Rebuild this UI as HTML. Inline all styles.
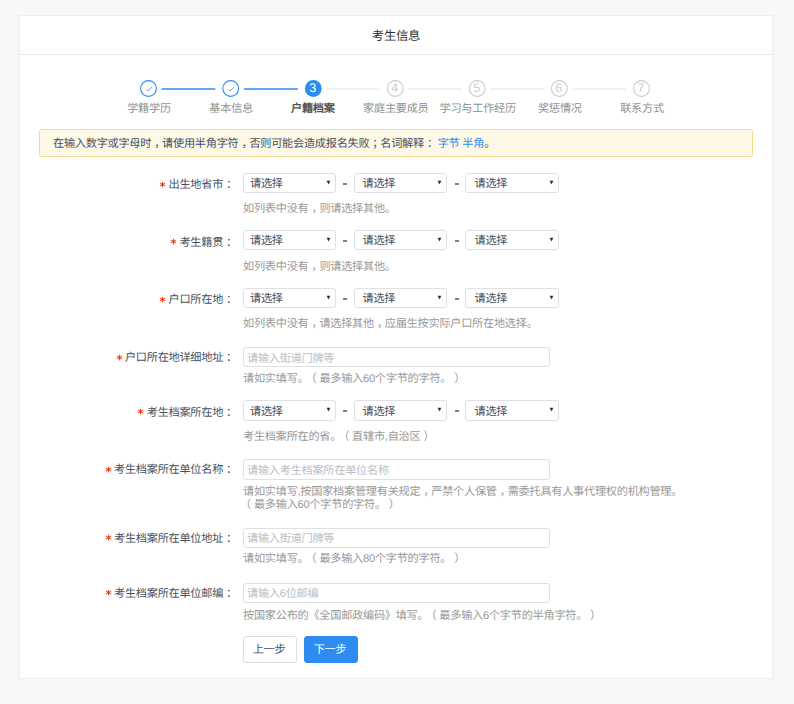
<!DOCTYPE html>
<html lang="zh-CN">
<head>
<meta charset="utf-8">
<title>考生信息</title>
<style>
*{box-sizing:border-box;margin:0;padding:0}
html,body{width:794px;height:704px;overflow:hidden}
body{background:#f8f8f9;font-family:"Liberation Sans",sans-serif;font-size:11.2px;letter-spacing:-0.28px;color:#495060;position:relative;text-spacing-trim:space-all;text-rendering:geometricPrecision}
.card{position:absolute;left:19px;top:15px;width:754px;height:664px;background:#fff;border:1px solid #eeeeef}
.hd{height:39px;border-bottom:1px solid #e9eaec;text-align:center;line-height:41px;font-size:12.4px;color:#2b2f38}
.steps{position:absolute;left:0;top:0;width:794px;height:0}
.step{position:absolute;top:80px;width:100px;margin-left:-50px;text-align:center}
.n{position:absolute;left:-1.2px;top:0;width:100px;height:17px;line-height:17px;font-size:12.5px;color:#ccc;text-align:center}
.step.cur .n{color:#fff}
.step .t{position:absolute;left:0;top:21px;width:100px;font-size:11.2px;letter-spacing:-0.28px;color:#909090;line-height:16px;white-space:nowrap}
.step.cur .t{color:#555;font-weight:bold;left:-1px}
.alert{position:absolute;left:39px;top:129px;width:714px;height:28px;background:#fef8e6;border:1px solid #fcd98f;border-radius:3px;line-height:26px;padding-top:1px;padding-left:13px;font-size:11.2px;letter-spacing:-0.28px;color:#495060}
.alert a{color:#2d8cf0;text-decoration:none}
.row{position:absolute;left:0;width:794px}
.lb{position:absolute;left:0;width:234px;text-align:right;line-height:20px;font-size:11.2px;letter-spacing:-0.28px;color:#495060;white-space:nowrap}
.lb i{display:inline-block;vertical-align:top;width:7px;height:7px;margin-right:2.4px;line-height:0;font-size:0}
.lb i svg{display:block}
.r{position:relative;left:3px}
.l{position:relative;left:-3px}
.sel{position:absolute;top:0;width:93px;height:20px;border:1px solid #dfe0e4;border-radius:3px;background:#fff;line-height:18px;padding-left:6px;font-size:11.2px;letter-spacing:-0.28px;color:#495060}
.sel:after{content:"";position:absolute;right:4px;top:6px;width:5px;height:5px;background:#2b303b;clip-path:polygon(0.6px 0.8px,4.4px 0.8px,2.5px 4.4px)}
.dash{position:absolute;top:10px;width:4px;height:2px;background:#7b818d;font-size:0;overflow:hidden}
.inp{position:absolute;left:243px;top:0;width:307px;height:20px;border:1px solid #dfe0e4;border-radius:3px;background:#fff;line-height:18px;padding-left:3px;font-size:11.2px;letter-spacing:-0.28px;color:#bbbec4}
.help{position:absolute;left:243px;font-size:11.2px;letter-spacing:-0.28px;color:#999;line-height:14px;white-space:nowrap}
.btn{position:absolute;top:636px;height:27px;width:54px;padding:1px 2px 0 0;border-radius:3px;font-size:11.2px;letter-spacing:-0.28px;text-align:center;line-height:25px;border:1px solid #dddee1;background:#fff;color:#495060}
.btn.p{background:#2d8cf0;border-color:#2d8cf0;color:#fff}
</style>
</head>
<body>
<div class="card"><div class="hd">考生信息</div></div>

<div class="steps">
<svg width="794" height="110" viewBox="0 0 794 110" style="position:absolute;left:0;top:0">
<line x1="161.7" y1="89" x2="215.3" y2="89" stroke="#2d8cf0" stroke-width="1.6"/>
<line x1="243.9" y1="89" x2="297.9" y2="89" stroke="#2d8cf0" stroke-width="1.6"/>
<line x1="326.5" y1="89" x2="379.9" y2="89" stroke="#ebecee" stroke-width="1.6"/>
<line x1="408.5" y1="89" x2="461.8" y2="89" stroke="#ebecee" stroke-width="1.6"/>
<line x1="490.4" y1="89" x2="544.0" y2="89" stroke="#ebecee" stroke-width="1.6"/>
<line x1="572.6" y1="89" x2="626.1" y2="89" stroke="#ebecee" stroke-width="1.6"/>
<circle cx="148.5" cy="88.5" r="7.9" fill="#fff" stroke="#2d8cf0" stroke-width="1.1"/><path d="M146.4 89.5 L147.8 91 L152.1 86.9" fill="none" stroke="#4a9af0" stroke-width="0.9"/>
<circle cx="230.7" cy="88.5" r="7.9" fill="#fff" stroke="#2d8cf0" stroke-width="1.1"/><path d="M228.6 89.5 L230.0 91 L234.3 86.9" fill="none" stroke="#4a9af0" stroke-width="0.9"/>
<circle cx="313.3" cy="88.5" r="8.4" fill="#2d8cf0"/>
<circle cx="395.3" cy="88.5" r="7.9" fill="#fff" stroke="#ccc" stroke-width="1.1"/>
<circle cx="477.2" cy="88.5" r="7.9" fill="#fff" stroke="#ccc" stroke-width="1.1"/>
<circle cx="559.4" cy="88.5" r="7.9" fill="#fff" stroke="#ccc" stroke-width="1.1"/>
<circle cx="641.5" cy="88.5" r="7.9" fill="#fff" stroke="#ccc" stroke-width="1.1"/>
</svg>
<div class="step done" style="left:149.0px"><div class="t">学籍学历</div></div>
<div class="step done" style="left:231.2px"><div class="t">基本信息</div></div>
<div class="step cur" style="left:313.8px"><div class="n">3</div><div class="t">户籍档案</div></div>
<div class="step" style="left:395.8px"><div class="n">4</div><div class="t">家庭主要成员</div></div>
<div class="step" style="left:477.7px"><div class="n">5</div><div class="t">学习与工作经历</div></div>
<div class="step" style="left:559.9px"><div class="n">6</div><div class="t">奖惩情况</div></div>
<div class="step" style="left:642.0px"><div class="n">7</div><div class="t">联系方式</div></div>
</div>

<div class="alert">在输入数字或字母时<span class="r">，</span>请使用半角字符<span class="r">，</span>否则可能会造成报名失败<span class="r">；</span>名词解释<span class="r">：</span> <a>字节</a> <a>半角</a>。</div>

<div class="row" style="top:173px">
  <div class="lb" style="padding-top:2px"><i style="margin-top:6px"><svg width="7" height="7" viewBox="0 0 7 7"><g stroke="#f4573a" stroke-width="1.05" stroke-linecap="round"><line x1="3.5" y1="0.9" x2="3.5" y2="6.1"/><line x1="1.3" y1="2.25" x2="5.7" y2="4.75"/><line x1="1.3" y1="4.75" x2="5.7" y2="2.25"/></g><circle cx="3.5" cy="3.5" r="0.95" fill="#e9200a"/></svg></i>出生地省市<span class="r">：</span></div>
  <div class="sel" style="padding-top:1px;left:243px">请选择</div><div class="dash" style="left:343px"></div>
  <div class="sel" style="padding-top:1px;left:354px;padding-left:7.5px">请选择</div><div class="dash" style="left:455px"></div>
  <div class="sel" style="padding-top:1px;left:465px;width:94px;padding-left:8.5px">请选择</div>
  <div class="help" style="top:29px">如列表中没有<span class="r">，</span>则请选择其他。</div>
</div>

<div class="row" style="top:230px">
  <div class="lb" style="padding-top:3px"><i style="margin-top:5px"><svg width="7" height="7" viewBox="0 0 7 7"><g stroke="#f4573a" stroke-width="1.05" stroke-linecap="round"><line x1="3.5" y1="0.9" x2="3.5" y2="6.1"/><line x1="1.3" y1="2.25" x2="5.7" y2="4.75"/><line x1="1.3" y1="4.75" x2="5.7" y2="2.25"/></g><circle cx="3.5" cy="3.5" r="0.95" fill="#e9200a"/></svg></i>考生籍贯<span class="r">：</span></div>
  <div class="sel" style="padding-top:1px;left:243px">请选择</div><div class="dash" style="left:343px"></div>
  <div class="sel" style="padding-top:1px;left:354px;padding-left:7.5px">请选择</div><div class="dash" style="left:455px"></div>
  <div class="sel" style="padding-top:1px;left:465px;width:94px;padding-left:8.5px">请选择</div>
  <div class="help" style="top:30px">如列表中没有<span class="r">，</span>则请选择其他。</div>
</div>

<div class="row" style="top:288px">
  <div class="lb" style="padding-top:2px"><i style="margin-top:6px"><svg width="7" height="7" viewBox="0 0 7 7"><g stroke="#f4573a" stroke-width="1.05" stroke-linecap="round"><line x1="3.5" y1="0.9" x2="3.5" y2="6.1"/><line x1="1.3" y1="2.25" x2="5.7" y2="4.75"/><line x1="1.3" y1="4.75" x2="5.7" y2="2.25"/></g><circle cx="3.5" cy="3.5" r="0.95" fill="#e9200a"/></svg></i>户口所在地<span class="r">：</span></div>
  <div class="sel" style="padding-top:1px;left:243px">请选择</div><div class="dash" style="left:343px"></div>
  <div class="sel" style="padding-top:1px;left:354px;padding-left:7.5px">请选择</div><div class="dash" style="left:455px"></div>
  <div class="sel" style="padding-top:1px;left:465px;width:94px;padding-left:8.5px">请选择</div>
  <div class="help" style="top:29px">如列表中没有<span class="r">，</span>请选择其他<span class="r">，</span>应届生按实际户口所在地选择。</div>
</div>

<div class="row" style="top:347px">
  <div class="lb" style="padding-top:1px"><i style="margin-top:6px"><svg width="7" height="7" viewBox="0 0 7 7"><g stroke="#f4573a" stroke-width="1.05" stroke-linecap="round"><line x1="3.5" y1="0.9" x2="3.5" y2="6.1"/><line x1="1.3" y1="2.25" x2="5.7" y2="4.75"/><line x1="1.3" y1="4.75" x2="5.7" y2="2.25"/></g><circle cx="3.5" cy="3.5" r="0.95" fill="#e9200a"/></svg></i>户口所在地详细地址<span class="r">：</span></div>
  <div class="inp" style="padding-top:2px;">请输入街道门牌等</div>
  <div class="help" style="top:25px">请如实填写。<span class="l">（</span>最多输入60个字节的字符。<span class="r">）</span></div>
</div>

<div class="row" style="top:400px">
  <div class="lb" style="padding-top:3px"><i style="margin-top:5px"><svg width="7" height="7" viewBox="0 0 7 7"><g stroke="#f4573a" stroke-width="1.05" stroke-linecap="round"><line x1="3.5" y1="0.9" x2="3.5" y2="6.1"/><line x1="1.3" y1="2.25" x2="5.7" y2="4.75"/><line x1="1.3" y1="4.75" x2="5.7" y2="2.25"/></g><circle cx="3.5" cy="3.5" r="0.95" fill="#e9200a"/></svg></i>考生档案所在地<span class="r">：</span></div>
  <div class="sel" style="padding-top:2px;height:21px;left:243px">请选择</div><div class="dash" style="left:343px"></div>
  <div class="sel" style="padding-top:2px;height:21px;left:354px;padding-left:7.5px">请选择</div><div class="dash" style="left:455px"></div>
  <div class="sel" style="padding-top:2px;height:21px;left:465px;width:94px;padding-left:8.5px">请选择</div>
  <div class="help" style="top:30px">考生档案所在的省。<span class="l">（</span>直辖市,自治区<span class="r">）</span></div>
</div>

<div class="row" style="top:460px">
  <div class="lb" style="padding-top:0px"><i style="margin-top:6px"><svg width="7" height="7" viewBox="0 0 7 7"><g stroke="#f4573a" stroke-width="1.05" stroke-linecap="round"><line x1="3.5" y1="0.9" x2="3.5" y2="6.1"/><line x1="1.3" y1="2.25" x2="5.7" y2="4.75"/><line x1="1.3" y1="4.75" x2="5.7" y2="2.25"/></g><circle cx="3.5" cy="3.5" r="0.95" fill="#e9200a"/></svg></i>考生档案所在单位名称<span class="r">：</span></div>
  <div class="inp" style="padding-top:2px;height:21px;top:-1px;">请输入考生档案所在单位名称</div>
  <div class="help" style="top:26px;line-height:13.2px">请如实填写,按国家档案管理有关规定<span class="r">，</span>严禁个人保管<span class="r">，</span>需委托具有人事代理权的机构管理。<br><span class="l">（</span>最多输入60个字节的字符。<span class="r">）</span></div>
</div>

<div class="row" style="top:528px">
  <div class="lb" style="padding-top:1px"><i style="margin-top:5px"><svg width="7" height="7" viewBox="0 0 7 7"><g stroke="#f4573a" stroke-width="1.05" stroke-linecap="round"><line x1="3.5" y1="0.9" x2="3.5" y2="6.1"/><line x1="1.3" y1="2.25" x2="5.7" y2="4.75"/><line x1="1.3" y1="4.75" x2="5.7" y2="2.25"/></g><circle cx="3.5" cy="3.5" r="0.95" fill="#e9200a"/></svg></i>考生档案所在单位地址<span class="r">：</span></div>
  <div class="inp" style="padding-top:1px;">请输入街道门牌等</div>
  <div class="help" style="top:24px">请如实填写。<span class="l">（</span>最多输入80个字节的字符。<span class="r">）</span></div>
</div>

<div class="row" style="top:583px">
  <div class="lb" style="padding-top:1px"><i style="margin-top:5px"><svg width="7" height="7" viewBox="0 0 7 7"><g stroke="#f4573a" stroke-width="1.05" stroke-linecap="round"><line x1="3.5" y1="0.9" x2="3.5" y2="6.1"/><line x1="1.3" y1="2.25" x2="5.7" y2="4.75"/><line x1="1.3" y1="4.75" x2="5.7" y2="2.25"/></g><circle cx="3.5" cy="3.5" r="0.95" fill="#e9200a"/></svg></i>考生档案所在单位邮编<span class="r">：</span></div>
  <div class="inp" style="padding-top:1px;">请输入6位邮编</div>
  <div class="help" style="top:26px">按国家公布的《全国邮政编码》填写。<span class="l">（</span>最多输入6个字节的半角字符。<span class="r">）</span></div>
</div>

<div class="btn" style="left:243px">上一步</div>
<div class="btn p" style="left:304px">下一步</div>
</body>
</html>
